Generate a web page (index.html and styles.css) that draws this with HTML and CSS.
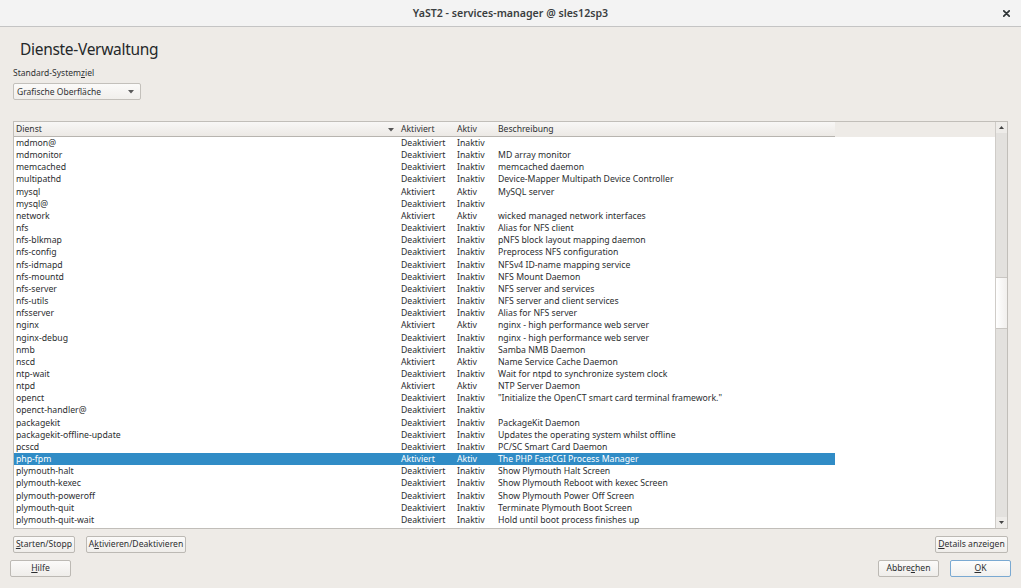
FILE: index.html
```html
<!DOCTYPE html>
<html lang="de">
<head>
<meta charset="utf-8">
<title>YaST2 - services-manager @ sles12sp3</title>
<link rel="stylesheet" href="styles.css">
</head>
<body>
<div class="window">
  <header class="titlebar">
    <span></span>
    <span class="title">YaST2 - services-manager @ sles12sp3</span>
    <span class="close"><svg width="7" height="7" viewBox="0 0 7 7"><path d="M0.8 0.8 L6.2 6.2 M6.2 0.8 L0.8 6.2" stroke="#2e3436" stroke-width="1.7" stroke-linecap="round"/></svg></span>
  </header>

  <main class="content">
    <h1 class="heading">Dienste-Verwaltung</h1>
    <div class="label">Standard-System<u>z</u>iel</div>
    <div class="combo">
      <span>Grafische Oberfläche</span>
      <svg class="combo-arrow" width="6" height="4" viewBox="0 0 6 4"><path d="M0 0 H6 L3 3.5 Z" fill="#5a5a5a"/></svg>
    </div>

    <div class="table">
      <div class="table-main">
        <div class="thead">
          <div class="hrow">
            <div class="hcell first"><span>Dienst</span><svg class="sort" width="6" height="4" viewBox="0 0 6 4"><path d="M0 0 H6 L3 3.5 Z" fill="#555"/></svg></div>
            <div class="hcell">Aktiviert</div>
            <div class="hcell">Aktiv</div>
            <div class="hcell">Beschreibung</div>
          </div>
        </div>
        <div class="tbody">
          <div class="row"><div class="cell">mdmon@</div><div class="cell">Deaktiviert</div><div class="cell">Inaktiv</div><div class="cell"></div></div>
          <div class="row"><div class="cell">mdmonitor</div><div class="cell">Deaktiviert</div><div class="cell">Inaktiv</div><div class="cell">MD array monitor</div></div>
          <div class="row"><div class="cell">memcached</div><div class="cell">Deaktiviert</div><div class="cell">Inaktiv</div><div class="cell">memcached daemon</div></div>
          <div class="row"><div class="cell">multipathd</div><div class="cell">Deaktiviert</div><div class="cell">Inaktiv</div><div class="cell">Device-Mapper Multipath Device Controller</div></div>
          <div class="row"><div class="cell">mysql</div><div class="cell">Aktiviert</div><div class="cell">Aktiv</div><div class="cell">MySQL server</div></div>
          <div class="row"><div class="cell">mysql@</div><div class="cell">Deaktiviert</div><div class="cell">Inaktiv</div><div class="cell"></div></div>
          <div class="row"><div class="cell">network</div><div class="cell">Aktiviert</div><div class="cell">Aktiv</div><div class="cell">wicked managed network interfaces</div></div>
          <div class="row"><div class="cell">nfs</div><div class="cell">Deaktiviert</div><div class="cell">Inaktiv</div><div class="cell">Alias for NFS client</div></div>
          <div class="row"><div class="cell">nfs-blkmap</div><div class="cell">Deaktiviert</div><div class="cell">Inaktiv</div><div class="cell">pNFS block layout mapping daemon</div></div>
          <div class="row"><div class="cell">nfs-config</div><div class="cell">Deaktiviert</div><div class="cell">Inaktiv</div><div class="cell">Preprocess NFS configuration</div></div>
          <div class="row"><div class="cell">nfs-idmapd</div><div class="cell">Deaktiviert</div><div class="cell">Inaktiv</div><div class="cell">NFSv4 ID-name mapping service</div></div>
          <div class="row"><div class="cell">nfs-mountd</div><div class="cell">Deaktiviert</div><div class="cell">Inaktiv</div><div class="cell">NFS Mount Daemon</div></div>
          <div class="row"><div class="cell">nfs-server</div><div class="cell">Deaktiviert</div><div class="cell">Inaktiv</div><div class="cell">NFS server and services</div></div>
          <div class="row"><div class="cell">nfs-utils</div><div class="cell">Deaktiviert</div><div class="cell">Inaktiv</div><div class="cell">NFS server and client services</div></div>
          <div class="row"><div class="cell">nfsserver</div><div class="cell">Deaktiviert</div><div class="cell">Inaktiv</div><div class="cell">Alias for NFS server</div></div>
          <div class="row"><div class="cell">nginx</div><div class="cell">Aktiviert</div><div class="cell">Aktiv</div><div class="cell">nginx - high performance web server</div></div>
          <div class="row"><div class="cell">nginx-debug</div><div class="cell">Deaktiviert</div><div class="cell">Inaktiv</div><div class="cell">nginx - high performance web server</div></div>
          <div class="row"><div class="cell">nmb</div><div class="cell">Deaktiviert</div><div class="cell">Inaktiv</div><div class="cell">Samba NMB Daemon</div></div>
          <div class="row"><div class="cell">nscd</div><div class="cell">Aktiviert</div><div class="cell">Aktiv</div><div class="cell">Name Service Cache Daemon</div></div>
          <div class="row"><div class="cell">ntp-wait</div><div class="cell">Deaktiviert</div><div class="cell">Inaktiv</div><div class="cell">Wait for ntpd to synchronize system clock</div></div>
          <div class="row"><div class="cell">ntpd</div><div class="cell">Aktiviert</div><div class="cell">Aktiv</div><div class="cell">NTP Server Daemon</div></div>
          <div class="row"><div class="cell">openct</div><div class="cell">Deaktiviert</div><div class="cell">Inaktiv</div><div class="cell">"Initialize the OpenCT smart card terminal framework."</div></div>
          <div class="row"><div class="cell">openct-handler@</div><div class="cell">Deaktiviert</div><div class="cell">Inaktiv</div><div class="cell"></div></div>
          <div class="row"><div class="cell">packagekit</div><div class="cell">Deaktiviert</div><div class="cell">Inaktiv</div><div class="cell">PackageKit Daemon</div></div>
          <div class="row"><div class="cell">packagekit-offline-update</div><div class="cell">Deaktiviert</div><div class="cell">Inaktiv</div><div class="cell">Updates the operating system whilst offline</div></div>
          <div class="row"><div class="cell">pcscd</div><div class="cell">Deaktiviert</div><div class="cell">Inaktiv</div><div class="cell">PC/SC Smart Card Daemon</div></div>
          <div class="row selected"><div class="cell">php-fpm</div><div class="cell">Aktiviert</div><div class="cell">Aktiv</div><div class="cell">The PHP FastCGI Process Manager</div></div>
          <div class="row"><div class="cell">plymouth-halt</div><div class="cell">Deaktiviert</div><div class="cell">Inaktiv</div><div class="cell">Show Plymouth Halt Screen</div></div>
          <div class="row"><div class="cell">plymouth-kexec</div><div class="cell">Deaktiviert</div><div class="cell">Inaktiv</div><div class="cell">Show Plymouth Reboot with kexec Screen</div></div>
          <div class="row"><div class="cell">plymouth-poweroff</div><div class="cell">Deaktiviert</div><div class="cell">Inaktiv</div><div class="cell">Show Plymouth Power Off Screen</div></div>
          <div class="row"><div class="cell">plymouth-quit</div><div class="cell">Deaktiviert</div><div class="cell">Inaktiv</div><div class="cell">Terminate Plymouth Boot Screen</div></div>
          <div class="row"><div class="cell">plymouth-quit-wait</div><div class="cell">Deaktiviert</div><div class="cell">Inaktiv</div><div class="cell">Hold until boot process finishes up</div></div>
          <div class="row"><div class="cell">plymouth-read-write</div><div class="cell">Deaktiviert</div><div class="cell">Inaktiv</div><div class="cell">Tell Plymouth To Write Out Runtime Data</div></div>
        </div>
      </div>
      <div class="vscroll">
        <div class="sbtn"><svg width="5" height="3" viewBox="0 0 5 3"><path d="M0 3 H5 L2.5 0 Z" fill="#444"/></svg></div>
        <div class="track"><div class="thumb"></div></div>
        <div class="sbtn"><svg width="5" height="3" viewBox="0 0 5 3"><path d="M0 0 H5 L2.5 3 Z" fill="#444"/></svg></div>
      </div>
    </div>

    <div class="actions">
      <div class="left-actions">
        <button class="btn w-start"><u>S</u>tarten/Stopp</button>
        <button class="btn w-act">A<u>k</u>tivieren/Deaktivieren</button>
      </div>
      <button class="btn w-details"><u>D</u>etails anzeigen</button>
    </div>
  </main>

  <footer class="footer">
    <button class="btn w-std"><u>H</u>ilfe</button>
    <div class="footer-right">
      <button class="btn w-std">Abbre<u>c</u>hen</button>
      <button class="btn w-std ok"><u>O</u>K</button>
    </div>
  </footer>
</div>
</body>
</html>
```

FILE: styles.css
```css
* { box-sizing: border-box; }

html, body {
  margin: 0;
  padding: 0;
}

body {
  width: 1021px;
  height: 588px;
  overflow: hidden;
  background: #eeebe7;
  font-family: "Noto Sans", "DejaVu Sans", sans-serif;
  color: #2f3133;
}

.window {
  width: 1021px;
  height: 588px;
  display: flex;
  flex-direction: column;
}

/* Title bar */
.titlebar {
  height: 27px;
  background: #f3f3f3;
  border-bottom: 1px solid #c4c4c4;
  display: grid;
  grid-template-columns: 1fr auto 1fr;
  align-items: center;
}

.title {
  font-size: 10.6px;
  font-weight: 600;
  color: #3a3e40;
  line-height: 26px;
}

.close {
  justify-self: end;
  margin-right: 11px;
  display: flex;
  align-items: center;
}

/* Content */
.content {
  padding: 0 13px;
  display: flex;
  flex-direction: column;
}

.heading {
  margin: 12px 0 0 7px;
  font-size: 15.5px;
  font-weight: 400;
  line-height: 20px;
  letter-spacing: -0.3px;
  color: #25282a;
}

.label {
  margin-top: 8px;
  font-size: 8.5px;
  line-height: 12px;
}

u { text-decoration: underline; text-underline-offset: 1px; }

.combo {
  margin-top: 4px;
  width: 128px;
  height: 17px;
  border: 1px solid #c3c0bb;
  border-radius: 2px;
  background: linear-gradient(#fbfaf9, #f1efec);
  display: flex;
  align-items: center;
  justify-content: space-between;
  padding: 0 6px 0 3px;
  font-size: 8.5px;
}

/* Table */
.table {
  margin-top: 21px;
  height: 408px;
  border: 1px solid #c1beb9;
  background: #ffffff;
  display: flex;
}

.table-main {
  flex: 1;
  overflow: hidden;
  display: flex;
  flex-direction: column;
}

.thead {
  height: 15px;
  background: #eeebe7;
  flex: none;
}

.hrow {
  width: 821px;
  height: 15px;
  display: grid;
  grid-template-columns: 384px 56px 41px 340px;
  background: linear-gradient(#f8f7f6, #ece9e5);
  border-bottom: 1px solid #b7b4af;
  font-size: 8.6px;
  line-height: 15px;
}

.hcell {
  padding-left: 3px;
  white-space: nowrap;
}

.hcell.first {
  padding-left: 2px;
  padding-right: 4px;
  display: flex;
  justify-content: space-between;
  align-items: center;
}

.tbody {
  flex: 1;
  overflow: hidden;
}

.row {
  width: 821px;
  height: 12.16px;
  display: grid;
  grid-template-columns: 384px 56px 41px 340px;
  font-size: 8.7px;
  line-height: 12.16px;
  color: #2c2e30;
}

.cell {
  padding-left: 3px;
  white-space: nowrap;
  overflow: hidden;
}

.row .cell:first-child { padding-left: 2px; }

.row.selected {
  background: #308cc6;
  color: #ffffff;
}

/* Scrollbar */
.vscroll {
  width: 12px;
  border-left: 1px solid #cfccc8;
  background: #e3e1de;
  display: flex;
  flex-direction: column;
}

.sbtn {
  height: 11px;
  flex: none;
  display: flex;
  align-items: center;
  justify-content: center;
  background: #eeece9;
}

.track {
  flex: 1;
  padding-top: 144px;
}

.thumb {
  height: 52px;
  background: linear-gradient(90deg, #ffffff, #f1efed);
  border-top: 1px solid #c9c6c2;
  border-bottom: 1px solid #c9c6c2;
}

/* Buttons */
.actions {
  margin-top: 7px;
  display: flex;
  justify-content: space-between;
}

.left-actions {
  display: flex;
  gap: 11px;
}

.btn {
  height: 17px;
  padding: 0;
  border: 1px solid #bcb9b4;
  border-radius: 2px;
  background: linear-gradient(#fbfaf9, #efedea);
  font-family: "Noto Sans", "DejaVu Sans", sans-serif;
  font-size: 8.6px;
  line-height: 15px;
  color: #2c2e30;
  white-space: nowrap;
}

.w-start { width: 62px; }
.w-act { width: 100px; }
.w-details { width: 73px; }
.w-std { width: 61px; }

.btn.ok {
  border-color: #7aa9d2;
  background: linear-gradient(#fdfdfd, #f1f0ee);
}

.footer {
  margin-top: 7px;
  padding: 0 10px;
  display: flex;
  justify-content: space-between;
}

.footer-right {
  display: flex;
  gap: 11px;
}
```
